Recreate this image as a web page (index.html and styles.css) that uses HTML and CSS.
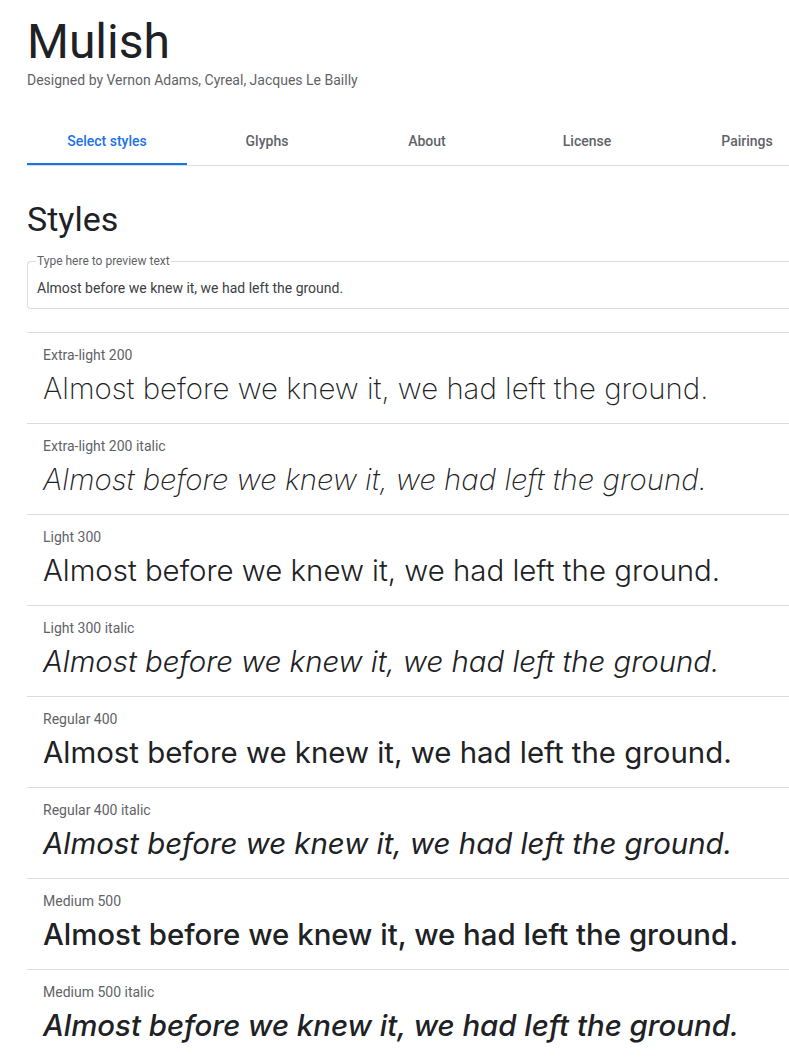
FILE: index.html
```html
<!DOCTYPE html>
<html>
<head>
<meta charset="utf-8">
<link rel="stylesheet" href="styles.css">
</head>
<body>
<div class="page">
  <header class="header">
    <h1 class="title">Mulish</h1>
    <p class="designer">Designed by Vernon Adams, Cyreal, Jacques Le Bailly</p>
  </header>
  <nav class="tabs">
    <div class="tab active">Select styles</div>
    <div class="tab">Glyphs</div>
    <div class="tab">About</div>
    <div class="tab">License</div>
    <div class="tab">Pairings</div>
  </nav>
  <h2 class="section-title">Styles</h2>
  <fieldset class="preview">
    <legend>Type here to preview text</legend>
    <div class="preview-text">Almost before we knew it, we had left the ground.</div>
  </fieldset>
  <div class="styles">
    <div class="style-row"><div class="label">Extra-light 200</div><div class="sample w200">Almost before we knew it, we had left the ground.</div></div>
    <div class="style-row"><div class="label">Extra-light 200 italic</div><div class="sample w200 it">Almost before we knew it, we had left the ground.</div></div>
    <div class="style-row"><div class="label">Light 300</div><div class="sample w300">Almost before we knew it, we had left the ground.</div></div>
    <div class="style-row"><div class="label">Light 300 italic</div><div class="sample w300 it">Almost before we knew it, we had left the ground.</div></div>
    <div class="style-row"><div class="label">Regular 400</div><div class="sample w400">Almost before we knew it, we had left the ground.</div></div>
    <div class="style-row"><div class="label">Regular 400 italic</div><div class="sample w400 it">Almost before we knew it, we had left the ground.</div></div>
    <div class="style-row"><div class="label">Medium 500</div><div class="sample w500">Almost before we knew it, we had left the ground.</div></div>
    <div class="style-row"><div class="label">Medium 500 italic</div><div class="sample w500 it">Almost before we knew it, we had left the ground.</div></div>
  </div>
</div>
</body>
</html>
```
FILE: styles.css
```css
html, body { margin: 0; padding: 0; background: #fff; }
body { overflow: hidden; font-family: Roboto, "Liberation Sans", sans-serif; color: #202124; }
.page { padding: 0 0 0 27px; width: 800px; }
.header { padding-top: 12px; }
.title { margin: 0; font-size: 48px; font-weight: 400; line-height: 60px; color: #202124; }
.designer { margin: 0; font-size: 14px; line-height: 16px; color: #5f6368; }
.tabs { display: flex; margin-top: 29px; border-bottom: 1px solid #dadce0; width: 762px; }
.tab { flex: 0 0 160px; text-align: center; font-size: 14px; font-weight: 500; color: #5f6368; line-height: 48px; height: 48px; box-sizing: border-box; white-space: nowrap; }
.tab.active { color: #1a73e8; border-bottom: 2px solid #1a73e8; margin-bottom: -1px; }
.section-title { margin: 0; padding-top: 33px; font-size: 34px; font-weight: 400; line-height: 40px; color: #202124; }
.preview { margin: 15px 0 0 0; width: 762px; box-sizing: border-box; border: 1px solid #dadce0; border-right: none; border-radius: 4px 0 0 4px; padding: 0 9px 10px 9px; }
.preview legend { font-size: 12px; color: #5f6368; padding: 0 1px; line-height: 14px; margin-left: -1px; }
.preview-text { font-size: 14px; color: #3c4043; line-height: 20px; padding-top: 10px; }
.styles { margin-top: 23px; width: 762px; }
.style-row { border-top: 1px solid #dadce0; padding: 14px 0 14px 16px; }
.label { font-size: 14px; color: #5f6368; line-height: 16px; }
.sample { font-family: Inter, sans-serif; font-size: 29.4px; line-height: 40px; margin-top: 6px; color: #202124; white-space: nowrap; }
.w200 { font-weight: 200; }
.w300 { font-weight: 300; }
.w400 { font-weight: 400; }
.w500 { font-weight: 500; }
.it { font-style: italic; }
```
